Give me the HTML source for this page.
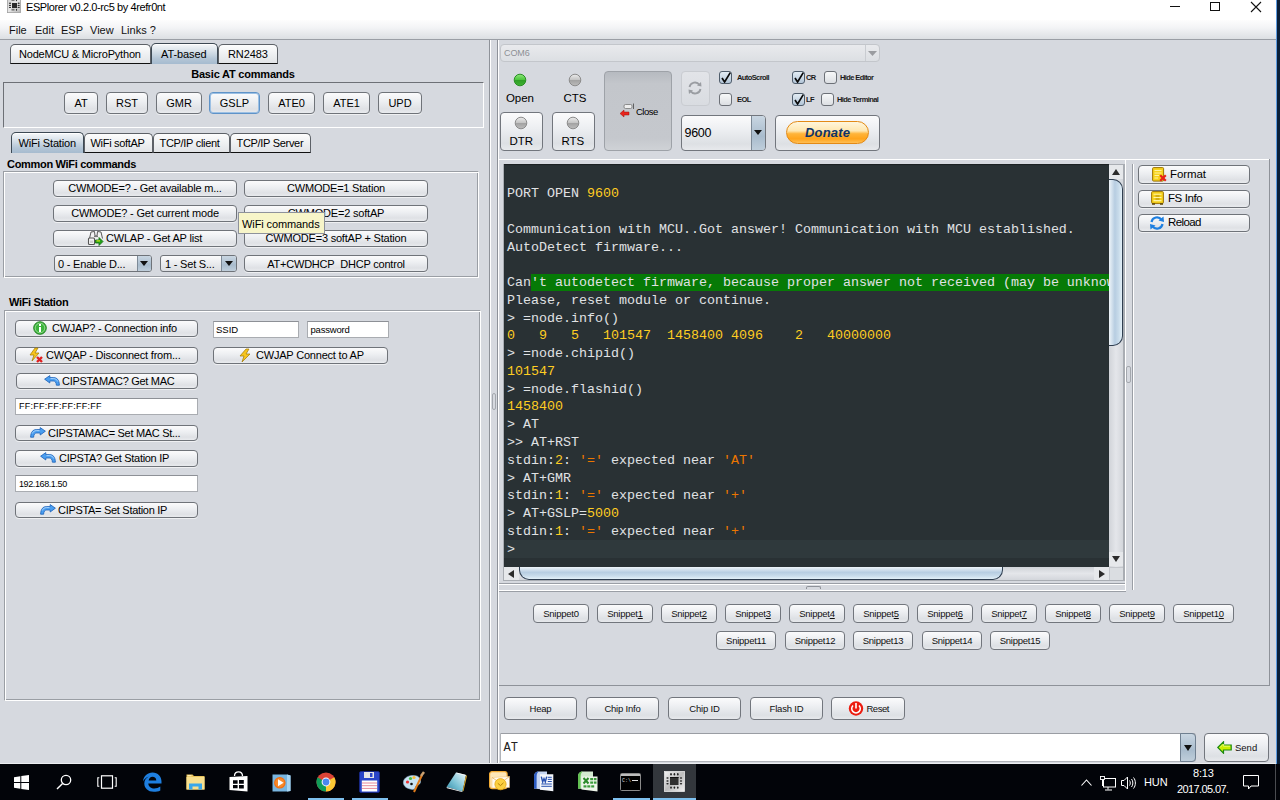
<!DOCTYPE html><html><head><meta charset="utf-8"><title>ESPlorer</title><style>
*{margin:0;padding:0;box-sizing:border-box}
html,body{width:1280px;height:800px;overflow:hidden;background:#d6d9df;font-family:"Liberation Sans",sans-serif;font-size:11px;color:#000}
div,span,svg{position:absolute}
.t{white-space:nowrap;line-height:1}
.t span,.t svg{position:relative}
pre span{position:static}
.btn{border:1px solid #6f7379;border-radius:4px;background:linear-gradient(#fbfbfc 0%,#eceef1 45%,#dfe1e5 80%,#e9ebee 100%);box-shadow:0 1px 0 rgba(255,255,255,.6)}
.sbtn{border:1px solid #72767d;border-radius:4px;background:linear-gradient(#fbfbfc 0%,#edeff2 40%,#dde0e4 82%,#e7e9ec 100%)}
.tab{border:1px solid #5d6167;border-bottom:1px solid #111;border-radius:5px 5px 0 0;background:linear-gradient(#fdfdfd,#eceef0 60%,#e2e4e7)}
.tabsel{border:1px solid #3d4954;border-bottom:none;border-radius:5px 5px 0 0;background:linear-gradient(#f6f8fa 0%,#d9e2ea 35%,#b3c5d6 75%,#a6bbcf 100%);box-shadow:inset 0 1px 0 #fff}
.etch{border-top:1px solid #8a8e95;border-left:1px solid #8a8e95;border-right:1px solid #fff;border-bottom:1px solid #fff;box-shadow:inset -1px -1px 0 #8a8e95, inset 1px 1px 0 #fff}
.fld{background:#fff;border:1px solid #a9acb1;border-top-color:#8d9096}
.combo{border:1px solid #6f7379;border-radius:3px;background:linear-gradient(#fbfbfc,#e6e8eb 60%,#dcdee2)}
.arrowbox{border-left:1px solid #7d8a97;background:linear-gradient(#c9d6e2,#a9bccd 60%,#bfcedb)}
.chk{border:1px solid #6c7077;border-radius:3px;background:linear-gradient(#f7f8f9,#dcdfe3)}
</style></head><body>
<div style="left:0px;top:0px;width:1276px;height:20px;background:#fff"></div>
<svg style="left:7px;top:-2px" width="14" height="15" viewBox="0 0 14 15"><defs><linearGradient id="tic" x1="0" y1="0" x2="1" y2="1"><stop offset="0" stop-color="#d0d0d0"/><stop offset="0.5" stop-color="#e6e6e6"/><stop offset="1" stop-color="#b4b4b4"/></linearGradient></defs><rect x="0.4" y="0" width="13.2" height="14.6" fill="url(#tic)" stroke="#a0a0a0" stroke-width="0.8"/><rect x="5" y="5" width="5" height="5" fill="#2a2a2a"/><g fill="#333"><ellipse cx="3" cy="5.3" rx="1.1" ry="0.7"/><ellipse cx="3" cy="7.4" rx="1.1" ry="0.7"/><ellipse cx="3" cy="9.4" rx="1.1" ry="0.7"/><ellipse cx="11.7" cy="5.3" rx="1.1" ry="0.7"/><ellipse cx="11.7" cy="7.4" rx="1.1" ry="0.7"/><ellipse cx="11.7" cy="9.4" rx="1.1" ry="0.7"/><ellipse cx="9.5" cy="2" rx="0.6" ry="1.3"/><ellipse cx="9.5" cy="11.8" rx="0.6" ry="1.1"/></g><rect x="4.5" y="1" width="3" height="2" fill="#777"/><rect x="4.5" y="10.8" width="3" height="1.8" fill="#777"/></svg>
<div class="t" style="left:26px;top:1.69px;font-size:11px;font-family:'Liberation Sans', sans-serif;letter-spacing:-0.4px;color:#000">ESPlorer v0.2.0-rc5 by 4refr0nt</div>
<div style="left:1170px;top:6px;width:10px;height:1px;background:#111"></div>
<div style="left:1210px;top:2px;width:10px;height:9px;border:1px solid #111"></div>
<svg style="left:1250px;top:1px" width="12" height="12" viewBox="0 0 12 12"><path d="M1 1L11 11M11 1L1 11" stroke="#111" stroke-width="1.1"/></svg>
<div style="left:1276px;top:0px;width:1px;height:764px;background:#5d9be0"></div>
<div style="left:1277px;top:0px;width:3px;height:764px;background:#0b1f38"></div>
<div style="left:0px;top:20px;width:1276px;height:19px;background:linear-gradient(#fdfdfd 0%,#f3f4f6 40%,#dcdfe3 100%)"></div>
<div style="left:0px;top:39px;width:1276px;height:1px;background:#9a9ea5"></div>
<div class="t" style="left:9px;top:24.69px;font-size:11px;font-family:'Liberation Sans', sans-serif;color:#111">File</div>
<div class="t" style="left:35px;top:24.69px;font-size:11px;font-family:'Liberation Sans', sans-serif;color:#111">Edit</div>
<div class="t" style="left:61px;top:24.69px;font-size:11px;font-family:'Liberation Sans', sans-serif;color:#111">ESP</div>
<div class="t" style="left:90px;top:24.69px;font-size:11px;font-family:'Liberation Sans', sans-serif;color:#111">View</div>
<div class="t" style="left:121px;top:24.69px;font-size:11px;font-family:'Liberation Sans', sans-serif;color:#111">Links ?</div>
<div class="tab" style="left:10px;top:44px;width:141px;height:20px"></div>
<div class="tab" style="left:218px;top:44px;width:60px;height:20px"></div>
<div class="tabsel" style="left:151px;top:43px;width:67px;height:21px"></div>
<div class="t" style="left:19px;top:48.69px;font-size:11px;font-family:'Liberation Sans', sans-serif;letter-spacing:-0.2px">NodeMCU &amp; MicroPython</div>
<div class="t" style="left:161px;top:48.69px;font-size:11px;font-family:'Liberation Sans', sans-serif;letter-spacing:-0.1px">AT-based</div>
<div class="t" style="left:228px;top:48.69px;font-size:11px;font-family:'Liberation Sans', sans-serif;letter-spacing:-0.1px">RN2483</div>
<div class="t" style="left:-57px;width:600px;text-align:center;top:69.39px;font-size:11px;font-weight:bold;letter-spacing:-0.2px">Basic AT commands</div>
<div style="left:3px;top:82px;width:481px;height:46px;border-top:1px solid #6d7076;border-left:1px solid #6d7076;border-right:1px solid #fff;border-bottom:1px solid #fff"></div>
<div class="btn" style="left:64px;top:92px;width:34px;height:22px;"></div>
<div class="t" style="left:64px;width:34px;text-align:center;top:98.29px;font-size:11px;">AT</div>
<div class="btn" style="left:106px;top:92px;width:42px;height:22px;"></div>
<div class="t" style="left:106px;width:42px;text-align:center;top:98.29px;font-size:11px;">RST</div>
<div class="btn" style="left:156px;top:92px;width:46px;height:22px;"></div>
<div class="t" style="left:156px;width:46px;text-align:center;top:98.29px;font-size:11px;">GMR</div>
<div class="btn" style="left:209px;top:92px;width:51px;height:22px;border-color:#5f93c8;box-shadow:inset 0 0 0 1px #9cc0e4"></div>
<div class="t" style="left:209px;width:51px;text-align:center;top:98.29px;font-size:11px;">GSLP</div>
<div class="btn" style="left:268px;top:92px;width:47px;height:22px;"></div>
<div class="t" style="left:268px;width:47px;text-align:center;top:98.29px;font-size:11px;">ATE0</div>
<div class="btn" style="left:323px;top:92px;width:47px;height:22px;"></div>
<div class="t" style="left:323px;width:47px;text-align:center;top:98.29px;font-size:11px;">ATE1</div>
<div class="btn" style="left:378px;top:92px;width:44px;height:22px;"></div>
<div class="t" style="left:378px;width:44px;text-align:center;top:98.29px;font-size:11px;">UPD</div>
<div class="tab" style="left:84px;top:133px;width:69px;height:20px"></div>
<div class="tab" style="left:153px;top:133px;width:77px;height:20px"></div>
<div class="tab" style="left:230px;top:133px;width:81px;height:20px"></div>
<div class="tabsel" style="left:11px;top:132px;width:73px;height:21px"></div>
<div class="t" style="left:18.5px;top:137.69px;font-size:11px;font-family:'Liberation Sans', sans-serif;letter-spacing:-0.15px">WiFi Station</div>
<div class="t" style="left:90.5px;top:137.69px;font-size:11px;font-family:'Liberation Sans', sans-serif;letter-spacing:-0.3px">WiFi softAP</div>
<div class="t" style="left:159.5px;top:137.69px;font-size:11px;font-family:'Liberation Sans', sans-serif;letter-spacing:-0.3px">TCP/IP client</div>
<div class="t" style="left:236.5px;top:137.69px;font-size:11px;font-family:'Liberation Sans', sans-serif;letter-spacing:-0.3px">TCP/IP Server</div>
<div class="t" style="left:7px;top:158.69px;font-size:11px;font-family:'Liberation Sans', sans-serif;font-weight:bold;letter-spacing:-0.3px">Common WiFi commands</div>
<div style="left:3px;top:171px;width:476px;height:107px;border-top:1px solid #9a9ea4;border-left:1px solid #9a9ea4;border-right:1px solid #fff;border-bottom:1px solid #fff;box-shadow:inset 1px 1px 0 #fff, inset -1px -1px 0 #9a9ea4"></div>
<div class="btn" style="left:53px;top:180px;width:184px;height:17px;"></div>
<div class="t" style="left:53px;width:184px;text-align:center;top:182.69px;font-size:11px;letter-spacing:-0.2px">CWMODE=? - Get available m...</div>
<div class="btn" style="left:244px;top:180px;width:184px;height:17px;"></div>
<div class="t" style="left:244px;width:184px;text-align:center;top:182.69px;font-size:11px;letter-spacing:-0.2px">CWMODE=1 Station</div>
<div class="btn" style="left:53px;top:205px;width:184px;height:17px;"></div>
<div class="t" style="left:53px;width:184px;text-align:center;top:207.69px;font-size:11px;letter-spacing:-0.2px">CWMODE? - Get current mode</div>
<div class="btn" style="left:244px;top:205px;width:184px;height:17px;"></div>
<div class="t" style="left:244px;width:184px;text-align:center;top:207.69px;font-size:11px;letter-spacing:-0.2px">CWMODE=2 softAP</div>
<div class="btn" style="left:53px;top:230px;width:184px;height:17px;"></div>
<svg style="left:87px;top:230px" width="17" height="16" viewBox="0 0 17 16"><path d="M2.5 8.5 L4 2 L7.5 1.5 L8 6 L10 6 L10.5 1.5 L14 2 L15.5 8.5" fill="#f2f2f2" stroke="#5a5a5a" stroke-width="1"/><rect x="1.5" y="8" width="6" height="6.5" rx="1" fill="#f4f4f4" stroke="#555" stroke-width="1.1"/><rect x="3" y="10.5" width="3" height="2.5" fill="#cfcfcf"/><path d="M7 6.5 H11" stroke="#777" stroke-width="1.2"/><path d="M8.5 10 L12 10 L12 7.5 L16 11.5 L12 15.5 L12 13 L8.5 13 Z" fill="#22a018" stroke="#0f6a0a" stroke-width="0.8"/><path d="M9.5 10.9 H13" stroke="#e6f020" stroke-width="1.1"/></svg>
<div class="t" style="left:106px;top:232.69px;font-size:11px;font-family:'Liberation Sans', sans-serif;letter-spacing:-0.2px">CWLAP - Get AP list</div>
<div class="btn" style="left:244px;top:230px;width:184px;height:17px;"></div>
<div class="t" style="left:244px;width:184px;text-align:center;top:232.69px;font-size:11px;letter-spacing:-0.2px">CWMODE=3 softAP + Station</div>
<div class="combo" style="left:54px;top:255px;width:98px;height:17px"></div>
<div class="arrowbox" style="left:137px;top:256px;width:14px;height:15px;border-radius:0 2px 2px 0"></div>
<svg style="left:140px;top:261px" width="8" height="5"><path d="M0 0H8L4 5Z" fill="#111"/></svg>
<div class="t" style="left:58px;top:258.69px;font-size:11px;font-family:'Liberation Sans', sans-serif;letter-spacing:-0.2px">0 - Enable D...</div>
<div class="combo" style="left:160px;top:255px;width:77px;height:17px"></div>
<div class="arrowbox" style="left:221px;top:256px;width:15px;height:15px;border-radius:0 2px 2px 0"></div>
<svg style="left:225px;top:261px" width="8" height="5"><path d="M0 0H8L4 5Z" fill="#111"/></svg>
<div class="t" style="left:165px;top:258.69px;font-size:11px;font-family:'Liberation Sans', sans-serif;letter-spacing:-0.2px">1 - Set S...</div>
<div class="btn" style="left:244px;top:255px;width:184px;height:17px;"></div>
<div class="t" style="left:244px;width:184px;text-align:center;top:258.69px;font-size:11px;letter-spacing:-0.2px">AT+CWDHCP&nbsp; DHCP control</div>
<div style="left:238px;top:212px;width:87px;height:22px;background:#f7f5c9;border:1px solid #8e929b"></div>
<div class="t" style="left:242px;top:218.69px;font-size:11px;font-family:'Liberation Sans', sans-serif;letter-spacing:-0.1px">WiFi commands</div>
<div class="t" style="left:9px;top:296.69px;font-size:11px;font-family:'Liberation Sans', sans-serif;font-weight:bold;letter-spacing:-0.35px">WiFi Station</div>
<div style="left:4px;top:310px;width:477px;height:391px;border-top:1px solid #9a9ea4;border-left:1px solid #9a9ea4;border-right:1px solid #fff;border-bottom:1px solid #fff;box-shadow:inset 1px 1px 0 #fff, inset -1px -1px 0 #9a9ea4"></div>
<div class="btn" style="left:15px;top:320px;width:183px;height:17px;"></div>
<svg style="left:33px;top:321px" width="14" height="14" viewBox="0 0 14 14"><circle cx="7" cy="7" r="6.3" fill="#3cb43c" stroke="#1d7a1d" stroke-width="0.9"/><circle cx="7" cy="7" r="4.8" fill="none" stroke="#c8f0c0" stroke-width="0.6"/><rect x="6" y="6" width="2" height="5" fill="#fff"/><rect x="6" y="3" width="2" height="2" fill="#fff"/></svg>
<div class="t" style="left:52px;top:322.69px;font-size:11px;font-family:'Liberation Sans', sans-serif;letter-spacing:-0.25px">CWJAP? - Connection info</div>
<div class="btn" style="left:15px;top:347px;width:183px;height:17px;"></div>
<svg style="left:28px;top:347px" width="16" height="16" viewBox="0 0 16 16"><path d="M7 1 L2 8 L6 8 L4 14 L11 6 L7 6 L10 1 Z" fill="#f7c51e" stroke="#a07800" stroke-width="0.7"/><path d="M9 10 L14 15 M14 10 L9 15" stroke="#e02020" stroke-width="2.4"/></svg>
<div class="t" style="left:46px;top:349.69px;font-size:11px;font-family:'Liberation Sans', sans-serif;letter-spacing:-0.2px">CWQAP - Disconnect from...</div>
<div class="btn" style="left:213px;top:347px;width:175px;height:17px;"></div>
<svg style="left:238px;top:348px" width="14" height="15" viewBox="0 0 14 15"><path d="M8 1 L2 8 L6 8 L4 14 L12 6 L8 6 L11 1 Z" fill="#f7c51e" stroke="#a07800" stroke-width="0.7"/></svg>
<div class="t" style="left:256px;top:349.69px;font-size:11px;font-family:'Liberation Sans', sans-serif;letter-spacing:-0.2px">CWJAP Connect to AP</div>
<div class="fld" style="left:213px;top:321px;width:86px;height:17px;"></div>
<div class="t" style="left:216px;top:324.96px;font-size:9.5px;font-family:'Liberation Sans', sans-serif;letter-spacing:0px">SSID</div>
<div class="fld" style="left:307px;top:321px;width:82px;height:17px;"></div>
<div class="t" style="left:310.5px;top:324.96px;font-size:9.5px;font-family:'Liberation Sans', sans-serif;letter-spacing:-0.2px">password</div>
<div class="btn" style="left:16px;top:373px;width:182px;height:16px;"></div>
<svg style="left:44px;top:375px" width="16" height="11" viewBox="0 0 16 11"><path d="M0.6 4.2 L5.8 0.6 L5.8 2.6 L9.5 2.6 C13 2.6 15.2 5 15.4 10.2 L12.4 10.2 C12.2 7.4 11.2 6 9.3 6 L5.8 6 L5.8 8 Z" fill="#4a9ef0" stroke="#1a5fb8" stroke-width="0.8" stroke-linejoin="round"/><path d="M6.5 3.6 H9.5 C11.5 3.6 13 4.6 13.8 6.5" fill="none" stroke="#bfe0ff" stroke-width="0.8"/></svg>
<div class="t" style="left:62px;top:375.69px;font-size:11px;font-family:'Liberation Sans', sans-serif;letter-spacing:-0.3px">CIPSTAMAC? Get MAC</div>
<div class="fld" style="left:15px;top:398px;width:183px;height:17px;"></div>
<div class="t" style="left:19px;top:402.38px;font-size:9px;font-family:'Liberation Sans', sans-serif;letter-spacing:0.25px">FF:FF:FF:FF:FF:FF</div>
<div class="btn" style="left:15px;top:425px;width:183px;height:16px;"></div>
<svg style="left:29.5px;top:426.5px" width="16" height="11" viewBox="0 0 16 11"><g transform="translate(16,0) scale(-1,1)"><path d="M0.6 4.2 L5.8 0.6 L5.8 2.6 L9.5 2.6 C13 2.6 15.2 5 15.4 10.2 L12.4 10.2 C12.2 7.4 11.2 6 9.3 6 L5.8 6 L5.8 8 Z" fill="#4a9ef0" stroke="#1a5fb8" stroke-width="0.8" stroke-linejoin="round"/></g><path d="M9.5 3.6 H6.5 C4.5 3.6 3 4.6 2.2 6.5" fill="none" stroke="#bfe0ff" stroke-width="0.8"/></svg>
<div class="t" style="left:48px;top:427.69px;font-size:11px;font-family:'Liberation Sans', sans-serif;letter-spacing:-0.3px">CIPSTAMAC= Set MAC St...</div>
<div class="btn" style="left:15px;top:450px;width:183px;height:17px;"></div>
<svg style="left:40px;top:452px" width="16" height="11" viewBox="0 0 16 11"><path d="M0.6 4.2 L5.8 0.6 L5.8 2.6 L9.5 2.6 C13 2.6 15.2 5 15.4 10.2 L12.4 10.2 C12.2 7.4 11.2 6 9.3 6 L5.8 6 L5.8 8 Z" fill="#4a9ef0" stroke="#1a5fb8" stroke-width="0.8" stroke-linejoin="round"/><path d="M6.5 3.6 H9.5 C11.5 3.6 13 4.6 13.8 6.5" fill="none" stroke="#bfe0ff" stroke-width="0.8"/></svg>
<div class="t" style="left:59px;top:452.69px;font-size:11px;font-family:'Liberation Sans', sans-serif;letter-spacing:-0.3px">CIPSTA? Get Station IP</div>
<div class="fld" style="left:15px;top:475px;width:183px;height:17px;"></div>
<div class="t" style="left:19px;top:480.38px;font-size:9px;font-family:'Liberation Sans', sans-serif;letter-spacing:-0.4px">192.168.1.50</div>
<div class="btn" style="left:15px;top:502px;width:183px;height:16px;"></div>
<svg style="left:40px;top:504px" width="16" height="11" viewBox="0 0 16 11"><g transform="translate(16,0) scale(-1,1)"><path d="M0.6 4.2 L5.8 0.6 L5.8 2.6 L9.5 2.6 C13 2.6 15.2 5 15.4 10.2 L12.4 10.2 C12.2 7.4 11.2 6 9.3 6 L5.8 6 L5.8 8 Z" fill="#4a9ef0" stroke="#1a5fb8" stroke-width="0.8" stroke-linejoin="round"/></g><path d="M9.5 3.6 H6.5 C4.5 3.6 3 4.6 2.2 6.5" fill="none" stroke="#bfe0ff" stroke-width="0.8"/></svg>
<div class="t" style="left:58px;top:504.69px;font-size:11px;font-family:'Liberation Sans', sans-serif;letter-spacing:-0.3px">CIPSTA= Set Station IP</div>
<div style="left:489px;top:40px;width:1px;height:724px;background:#8e9299"></div>
<div style="left:490px;top:40px;width:1px;height:724px;background:#fff"></div>
<div style="left:492px;top:393px;width:4px;height:17px;border:1px solid #a4a8ae;border-radius:2px"></div>
<div style="left:497px;top:40px;width:1px;height:724px;background:#8e9299"></div>
<div style="left:498px;top:40px;width:1px;height:724px;background:#fff"></div>
<div style="left:500px;top:44px;width:380px;height:18px;border:1px solid #c3c6cb;border-radius:4px;background:linear-gradient(#e9eaed,#dcdfe3)"></div>
<div style="left:865px;top:45px;width:1px;height:16px;background:#c9ccd1"></div>
<svg style="left:868px;top:51px" width="9" height="5"><path d="M0 0H9L4.5 5Z" fill="#9a9ca0"/></svg>
<div class="t" style="left:504px;top:48.68px;font-size:9px;font-family:'Liberation Sans', sans-serif;color:#8d9095;letter-spacing:-0.1px">COM6</div>
<svg style="left:513px;top:73px" width="14" height="14" viewBox="0 0 14 14"><defs><linearGradient id="lg520_80" x1="0" y1="0" x2="0" y2="1"><stop offset="0" stop-color="#8fe87c"/><stop offset="0.48" stop-color="#4cc63c"/><stop offset="0.52" stop-color="#2f9e26"/><stop offset="1" stop-color="#3fb332"/></linearGradient></defs><circle cx="7" cy="7" r="5.8" fill="url(#lg520_80)" stroke="#2a8f25" stroke-width="1"/></svg>
<div class="t" style="left:506px;top:93.47px;font-size:11.5px;font-family:'Liberation Sans', sans-serif;letter-spacing:-0.1px">Open</div>
<svg style="left:568px;top:73px" width="14" height="14" viewBox="0 0 14 14"><defs><linearGradient id="lg575_80" x1="0" y1="0" x2="0" y2="1"><stop offset="0" stop-color="#ececec"/><stop offset="0.48" stop-color="#c4c4c4"/><stop offset="0.52" stop-color="#a2a2a2"/><stop offset="1" stop-color="#bcbcbc"/></linearGradient></defs><circle cx="7" cy="7" r="5.8" fill="url(#lg575_80)" stroke="#8c8c8c" stroke-width="1"/></svg>
<div class="t" style="left:563.5px;top:93.47px;font-size:11.5px;font-family:'Liberation Sans', sans-serif;letter-spacing:-0.1px">CTS</div>
<div class="sbtn" style="left:500px;top:112px;width:43px;height:39px;"></div>
<svg style="left:514px;top:115.5px" width="14" height="14" viewBox="0 0 14 14"><defs><linearGradient id="lg521_122.5" x1="0" y1="0" x2="0" y2="1"><stop offset="0" stop-color="#ececec"/><stop offset="0.48" stop-color="#c4c4c4"/><stop offset="0.52" stop-color="#a2a2a2"/><stop offset="1" stop-color="#bcbcbc"/></linearGradient></defs><circle cx="7" cy="7" r="5.8" fill="url(#lg521_122.5)" stroke="#8c8c8c" stroke-width="1"/></svg>
<div class="t" style="left:509.5px;top:136.27px;font-size:11.5px;font-family:'Liberation Sans', sans-serif;letter-spacing:-0.1px">DTR</div>
<div class="sbtn" style="left:552px;top:112px;width:43px;height:39px;"></div>
<svg style="left:566px;top:115.5px" width="14" height="14" viewBox="0 0 14 14"><defs><linearGradient id="lg573_122.5" x1="0" y1="0" x2="0" y2="1"><stop offset="0" stop-color="#ececec"/><stop offset="0.48" stop-color="#c4c4c4"/><stop offset="0.52" stop-color="#a2a2a2"/><stop offset="1" stop-color="#bcbcbc"/></linearGradient></defs><circle cx="7" cy="7" r="5.8" fill="url(#lg573_122.5)" stroke="#8c8c8c" stroke-width="1"/></svg>
<div class="t" style="left:561.5px;top:136.27px;font-size:11.5px;font-family:'Liberation Sans', sans-serif;letter-spacing:-0.1px">RTS</div>
<div style="left:604px;top:71px;width:68px;height:80px;border:1px solid #9ea2a8;border-radius:4px;background:linear-gradient(#b6bac0,#c3c6cb 15%,#c5c8cd 85%,#cfd2d6)"></div>
<svg style="left:619px;top:103px" width="16" height="15" viewBox="0 0 16 15"><rect x="5" y="1.5" width="8" height="4" rx="1.5" fill="#eee" stroke="#777" stroke-width="0.8"/><path d="M14.5 0.5V6" stroke="#555" stroke-width="0.9"/><path d="M1 10.5 L5 7 L5 9 L10 9 L10 12 L5 12 L5 14 Z" fill="#e8231c" stroke="#a0100a" stroke-width="0.5"/></svg>
<div class="t" style="left:636px;top:107.46px;font-size:9.5px;font-family:'Liberation Sans', sans-serif;letter-spacing:-0.5px">Close</div>
<div style="left:681px;top:71px;width:29px;height:35px;border:1px solid #c9ccd1;border-radius:4px;background:linear-gradient(#e2e4e8,#d9dce1)"></div>
<svg style="left:687px;top:80px" width="16" height="16" viewBox="0 0 16 16"><path d="M2.5 7 A5.5 5.5 0 0 1 12.5 5" fill="none" stroke="#9a9da2" stroke-width="1.8"/><path d="M13.5 9 A5.5 5.5 0 0 1 3.5 11" fill="none" stroke="#9a9da2" stroke-width="1.8"/><path d="M10 5.5 L14.5 6.5 L14 2Z" fill="#9a9da2"/><path d="M6 10.5 L1.5 9.5 L2 14Z" fill="#9a9da2"/></svg>
<div class="chk" style="left:719px;top:71px;width:13px;height:13px;border-color:#4f5d6c;background:linear-gradient(#e3ecf4,#b3c6d8)"></div>
<svg style="left:721px;top:72px" width="10" height="11" viewBox="0 0 10 11"><path d="M1 6 L3.6 10 L9.3 0.6" fill="none" stroke="#0a0a0a" stroke-width="1.7"/></svg>
<div class="t" style="left:737px;top:73.95px;font-size:7.5px;font-family:'Liberation Sans', sans-serif;letter-spacing:-0.6px;color:#1a1a1a;font-weight:bold">AutoScroll</div>
<div class="chk" style="left:719px;top:93px;width:13px;height:13px;"></div>
<div class="t" style="left:737px;top:95.75px;font-size:7.5px;font-family:'Liberation Sans', sans-serif;letter-spacing:-0.6px;color:#1a1a1a;font-weight:bold">EOL</div>
<div class="chk" style="left:792px;top:71px;width:13px;height:13px;border-color:#4f5d6c;background:linear-gradient(#e3ecf4,#b3c6d8)"></div>
<svg style="left:794px;top:72px" width="10" height="11" viewBox="0 0 10 11"><path d="M1 6 L3.6 10 L9.3 0.6" fill="none" stroke="#0a0a0a" stroke-width="1.7"/></svg>
<div class="t" style="left:806px;top:73.95px;font-size:7.5px;font-family:'Liberation Sans', sans-serif;letter-spacing:-0.6px;color:#1a1a1a;font-weight:bold">CR</div>
<div class="chk" style="left:792px;top:93px;width:13px;height:13px;border-color:#4f5d6c;background:linear-gradient(#e3ecf4,#b3c6d8)"></div>
<svg style="left:794px;top:94px" width="10" height="11" viewBox="0 0 10 11"><path d="M1 6 L3.6 10 L9.3 0.6" fill="none" stroke="#0a0a0a" stroke-width="1.7"/></svg>
<div class="t" style="left:806px;top:95.75px;font-size:7.5px;font-family:'Liberation Sans', sans-serif;letter-spacing:-0.6px;color:#1a1a1a;font-weight:bold">LF</div>
<div class="chk" style="left:824px;top:71px;width:13px;height:13px;"></div>
<div class="t" style="left:840px;top:73.95px;font-size:7.5px;font-family:'Liberation Sans', sans-serif;letter-spacing:-0.6px;color:#1a1a1a;font-weight:bold">Hide Editor</div>
<div class="chk" style="left:821px;top:93px;width:13px;height:13px;"></div>
<div class="t" style="left:837px;top:95.75px;font-size:7.5px;font-family:'Liberation Sans', sans-serif;letter-spacing:-0.6px;color:#1a1a1a;font-weight:bold">Hide Terminal</div>
<div class="sbtn" style="left:681px;top:115px;width:85px;height:36px"></div>
<div class="arrowbox" style="left:751px;top:116px;width:14px;height:34px;border-radius:0 3px 3px 0"></div>
<svg style="left:754px;top:130px" width="8" height="5"><path d="M0 0H8L4 5Z" fill="#111"/></svg>
<div class="t" style="left:684.5px;top:126.72px;font-size:12.5px;font-family:'Liberation Sans', sans-serif;letter-spacing:-0.3px">9600</div>
<div class="sbtn" style="left:775px;top:115px;width:105px;height:36px"></div>
<div style="left:786px;top:121px;width:83px;height:23px;border:1px solid #e38a16;border-radius:12px;background:linear-gradient(#fff6dc 0%,#ffe7b0 42%,#ffb43a 56%,#ffa41c 80%,#ffbf55 100%)"></div>
<div class="t" style="left:805px;top:125.60px;font-size:13px;font-family:'Liberation Sans', sans-serif;font-weight:bold;font-style:italic;color:#0e3468;letter-spacing:0.2px">Donate</div>
<div style="left:499px;top:159px;width:771px;height:1px;background:#fff"></div>
<div style="left:1269px;top:159px;width:1px;height:527px;background:#8e9299"></div>
<div style="left:503px;top:164px;width:621px;height:417px;border:1px solid #a9adb3;background:#e2e4e8"></div>
<div style="left:504px;top:164px;width:605px;height:403px;background:#293134;box-shadow:inset 0 1px 1px rgba(0,0,0,.35)"></div>
<div style="left:504px;top:540.3px;width:605px;height:17.8px;background:#2f393c"></div>
<div style="left:1109px;top:165px;width:14px;height:402px;background:linear-gradient(90deg,#d0d3d8,#e4e6ea 50%,#d3d6db)"></div>
<div style="left:1109px;top:165px;width:14px;height:14px;background:#e6e8eb"></div>
<svg style="left:1112px;top:169px" width="8" height="6"><path d="M0 6H8L4 0Z" fill="#2b2b2b"/></svg>
<div style="left:1109px;top:179px;width:14px;height:167px;border:1px solid #2f3e50;border-left:none;border-radius:0 10px 10px 0;background:linear-gradient(90deg,#eef4f9,#b7cde1 45%,#c9dceb 75%,#e3f0f8)"></div>
<div style="left:1109px;top:552px;width:14px;height:14px;background:#e6e8eb"></div>
<svg style="left:1112px;top:556px" width="8" height="6"><path d="M0 0H8L4 6Z" fill="#2b2b2b"/></svg>
<div style="left:504px;top:567px;width:605px;height:13px;background:linear-gradient(#d0d3d8,#e4e6ea 50%,#d3d6db)"></div>
<div style="left:504px;top:567px;width:15px;height:13px;background:#e6e8eb"></div>
<svg style="left:508px;top:570px" width="6" height="8"><path d="M6 0V8L0 4Z" fill="#2b2b2b"/></svg>
<div style="left:519px;top:567px;width:484px;height:13px;border:1px solid #2f3e50;border-top:none;border-radius:0 0 10px 10px;background:linear-gradient(#eef4f9,#b7cde1 45%,#c9dceb 75%,#e3f0f8)"></div>
<div style="left:1094px;top:567px;width:15px;height:13px;background:#e6e8eb"></div>
<svg style="left:1099px;top:570px" width="6" height="8"><path d="M0 0V8L6 4Z" fill="#2b2b2b"/></svg>
<div style="left:1109px;top:567px;width:14px;height:13px;background:#dadde1;border-left:1px solid #c4c7cc;border-top:1px solid #c4c7cc"></div>
<div style="left:504px;top:164px;width:605px;height:403px;overflow:hidden">
<div style="left:27px;top:109.7px;width:600px;height:17.8px;background:#067a06"></div>
<pre style="position:absolute;left:3px;top:3.5px;margin:0;font-family:'Liberation Mono',monospace;font-size:13.333px;line-height:17.77px;color:#e0e2e4">

PORT OPEN <span style="color:#ffcd22">9600</span>

Communication with MCU..Got answer! Communication with MCU established.
AutoDetect firmware...

Can't autodetect firmware, because proper answer not received (may be unknown firmware)
Please, reset module or continue.
&gt; =node.info()
<span style="color:#ffcd22">0   9   5   101547  1458400 4096    2   40000000</span>
&gt; =node.chipid()
<span style="color:#ffcd22">101547</span>
&gt; =node.flashid()
<span style="color:#ffcd22">1458400</span>
&gt; AT
&gt;&gt; AT+RST
stdin:<span style="color:#ffcd22">2</span>: <span style="color:#ec7600">'='</span> expected near <span style="color:#ec7600">'AT'</span>
&gt; AT+GMR
stdin:<span style="color:#ffcd22">1</span>: <span style="color:#ec7600">'='</span> expected near <span style="color:#ec7600">'+'</span>
&gt; AT+GSLP=<span style="color:#ffcd22">5000</span>
stdin:<span style="color:#ffcd22">1</span>: <span style="color:#ec7600">'='</span> expected near <span style="color:#ec7600">'+'</span>
&gt;</pre>
</div>
<div style="left:499px;top:583px;width:627px;height:1px;background:#9a9ea5"></div>
<div style="left:499px;top:584px;width:627px;height:1px;background:#fff"></div>
<div style="left:499px;top:591px;width:627px;height:1px;background:#9a9ea5"></div>
<div style="left:499px;top:590px;width:627px;height:1px;background:#fff"></div>
<div style="left:806px;top:586px;width:15px;height:3px;border:1px solid #8e9299;border-bottom:none;border-radius:2px 2px 0 0"></div>
<div style="left:1125px;top:159px;width:1px;height:432px;background:#fff"></div>
<div style="left:1124px;top:164px;width:1px;height:417px;background:#a9adb3"></div>
<div style="left:1132px;top:164px;width:1px;height:426px;background:#9a9ea5"></div>
<div style="left:1133px;top:164px;width:1px;height:426px;background:#fff"></div>
<div style="left:1126px;top:366px;width:5px;height:17px;border:1px solid #a4a8ae;border-radius:2px"></div>
<div class="btn" style="left:1138px;top:165px;width:112px;height:19px;"></div>
<svg style="left:1152px;top:167px" width="15" height="15" viewBox="0 0 15 15"><rect x="0.6" y="0.6" width="11" height="13.5" rx="1" fill="#f7d21c" stroke="#9c7406" stroke-width="1"/><path d="M2.5 3.5H9.5M2.5 6H9.5M2.5 8.5H7M2.5 11H6" stroke="#fff3a0" stroke-width="1"/><path d="M8.2 8.2L13.8 13.8M13.8 8.2L8.2 13.8" stroke="#e8201a" stroke-width="2.2"/></svg>
<div class="t" style="left:1170px;top:169.07px;font-size:11.5px;font-family:'Liberation Sans', sans-serif;letter-spacing:-0.1px">Format</div>
<div class="btn" style="left:1138px;top:190px;width:112px;height:18px;"></div>
<svg style="left:1151px;top:191px" width="13" height="14" viewBox="0 0 13 14"><rect x="0.6" y="0.6" width="11.8" height="11.8" rx="1" fill="#f7d21c" stroke="#9c7406" stroke-width="1"/><path d="M2.5 3.2H10.5M2.5 6.5H10.5M2.5 9.6H10.5" stroke="#fff3a0" stroke-width="1.1"/><path d="M4.5 5H8.5M4.5 8H8.5" stroke="#9c7406" stroke-width="0.8"/><rect x="1" y="12" width="3" height="1.8" fill="#6b5210"/><rect x="9" y="12" width="3" height="1.8" fill="#6b5210"/></svg>
<div class="t" style="left:1168px;top:192.87px;font-size:11.5px;font-family:'Liberation Sans', sans-serif;letter-spacing:-0.4px">FS Info</div>
<div class="btn" style="left:1138px;top:214px;width:112px;height:18px;"></div>
<svg style="left:1149px;top:215px" width="16" height="16" viewBox="0 0 16 16"><path d="M2.5 7 A5.5 5.5 0 0 1 12.5 4.8" fill="none" stroke="#1e7fe0" stroke-width="2.2"/><path d="M13.5 9 A5.5 5.5 0 0 1 3.5 11.2" fill="none" stroke="#1e7fe0" stroke-width="2.2"/><path d="M9.5 5.5 L15 7 L14.5 1.5Z" fill="#1e7fe0"/><path d="M6.5 10.5 L1 9 L1.5 14.5Z" fill="#1e7fe0"/></svg>
<div class="t" style="left:1168px;top:216.87px;font-size:11.5px;font-family:'Liberation Sans', sans-serif;letter-spacing:-0.6px">Reload</div>
<div style="left:499px;top:591px;width:771px;height:95px;border-right:1px solid #8e9299;border-bottom:1px solid #8e9299"></div>
<div class="sbtn" style="left:533px;top:604px;width:56px;height:19px;border-radius:4px"></div>
<div class="t" style="left:533px;width:56px;text-align:center;top:609.26px;font-size:9.5px;letter-spacing:-0.25px;color:#111">Snippet0</div>
<div class="sbtn" style="left:597px;top:604px;width:56px;height:19px;border-radius:4px"></div>
<div class="t" style="left:597px;width:56px;text-align:center;top:609.26px;font-size:9.5px;letter-spacing:-0.25px;color:#111">Snippet<span style="text-decoration:underline">1</span></div>
<div class="sbtn" style="left:661px;top:604px;width:56px;height:19px;border-radius:4px"></div>
<div class="t" style="left:661px;width:56px;text-align:center;top:609.26px;font-size:9.5px;letter-spacing:-0.25px;color:#111">Snippet<span style="text-decoration:underline">2</span></div>
<div class="sbtn" style="left:725px;top:604px;width:56px;height:19px;border-radius:4px"></div>
<div class="t" style="left:725px;width:56px;text-align:center;top:609.26px;font-size:9.5px;letter-spacing:-0.25px;color:#111">Snippet<span style="text-decoration:underline">3</span></div>
<div class="sbtn" style="left:789px;top:604px;width:56px;height:19px;border-radius:4px"></div>
<div class="t" style="left:789px;width:56px;text-align:center;top:609.26px;font-size:9.5px;letter-spacing:-0.25px;color:#111">Snippet<span style="text-decoration:underline">4</span></div>
<div class="sbtn" style="left:853px;top:604px;width:56px;height:19px;border-radius:4px"></div>
<div class="t" style="left:853px;width:56px;text-align:center;top:609.26px;font-size:9.5px;letter-spacing:-0.25px;color:#111">Snippet<span style="text-decoration:underline">5</span></div>
<div class="sbtn" style="left:917px;top:604px;width:56px;height:19px;border-radius:4px"></div>
<div class="t" style="left:917px;width:56px;text-align:center;top:609.26px;font-size:9.5px;letter-spacing:-0.25px;color:#111">Snippet<span style="text-decoration:underline">6</span></div>
<div class="sbtn" style="left:981px;top:604px;width:56px;height:19px;border-radius:4px"></div>
<div class="t" style="left:981px;width:56px;text-align:center;top:609.26px;font-size:9.5px;letter-spacing:-0.25px;color:#111">Snippet<span style="text-decoration:underline">7</span></div>
<div class="sbtn" style="left:1045px;top:604px;width:56px;height:19px;border-radius:4px"></div>
<div class="t" style="left:1045px;width:56px;text-align:center;top:609.26px;font-size:9.5px;letter-spacing:-0.25px;color:#111">Snippet<span style="text-decoration:underline">8</span></div>
<div class="sbtn" style="left:1109px;top:604px;width:56px;height:19px;border-radius:4px"></div>
<div class="t" style="left:1109px;width:56px;text-align:center;top:609.26px;font-size:9.5px;letter-spacing:-0.25px;color:#111">Snippet<span style="text-decoration:underline">9</span></div>
<div class="sbtn" style="left:1173px;top:604px;width:61px;height:19px;border-radius:4px"></div>
<div class="t" style="left:1173px;width:61px;text-align:center;top:609.26px;font-size:9.5px;letter-spacing:-0.25px;color:#111">Snippet1<span style="text-decoration:underline">0</span></div>
<div class="sbtn" style="left:716px;top:631px;width:60px;height:19px;border-radius:4px"></div>
<div class="t" style="left:716px;width:60px;text-align:center;top:636.26px;font-size:9.5px;letter-spacing:-0.25px;color:#111">Snippet11</div>
<div class="sbtn" style="left:785px;top:631px;width:60px;height:19px;border-radius:4px"></div>
<div class="t" style="left:785px;width:60px;text-align:center;top:636.26px;font-size:9.5px;letter-spacing:-0.25px;color:#111">Snippet12</div>
<div class="sbtn" style="left:853px;top:631px;width:60px;height:19px;border-radius:4px"></div>
<div class="t" style="left:853px;width:60px;text-align:center;top:636.26px;font-size:9.5px;letter-spacing:-0.25px;color:#111">Snippet13</div>
<div class="sbtn" style="left:922px;top:631px;width:60px;height:19px;border-radius:4px"></div>
<div class="t" style="left:922px;width:60px;text-align:center;top:636.26px;font-size:9.5px;letter-spacing:-0.25px;color:#111">Snippet14</div>
<div class="sbtn" style="left:990px;top:631px;width:60px;height:19px;border-radius:4px"></div>
<div class="t" style="left:990px;width:60px;text-align:center;top:636.26px;font-size:9.5px;letter-spacing:-0.25px;color:#111">Snippet15</div>
<div class="sbtn" style="left:504px;top:697px;width:73px;height:23px"></div>
<div class="t" style="left:504px;width:73px;text-align:center;top:704.16px;font-size:9.5px;letter-spacing:-0.2px;color:#111">Heap</div>
<div class="sbtn" style="left:586px;top:697px;width:73px;height:23px"></div>
<div class="t" style="left:586px;width:73px;text-align:center;top:704.16px;font-size:9.5px;letter-spacing:-0.2px;color:#111">Chip Info</div>
<div class="sbtn" style="left:668px;top:697px;width:73px;height:23px"></div>
<div class="t" style="left:668px;width:73px;text-align:center;top:704.16px;font-size:9.5px;letter-spacing:-0.2px;color:#111">Chip ID</div>
<div class="sbtn" style="left:750px;top:697px;width:73px;height:23px"></div>
<div class="t" style="left:750px;width:73px;text-align:center;top:704.16px;font-size:9.5px;letter-spacing:-0.2px;color:#111">Flash ID</div>
<div class="sbtn" style="left:831px;top:697px;width:74px;height:23px"></div>
<svg style="left:848px;top:700px" width="16" height="17" viewBox="0 0 16 17"><circle cx="8" cy="8.5" r="7.2" fill="#ec1c10"/><path d="M5 5.5 A4.3 4.3 0 1 0 11 5.5" fill="none" stroke="#fff" stroke-width="1.5"/><path d="M8 3V8.5" stroke="#fff" stroke-width="1.6"/></svg>
<div class="t" style="left:866.5px;top:703.96px;font-size:9.5px;font-family:'Liberation Sans', sans-serif;letter-spacing:-0.5px;color:#111">Reset</div>
<div style="left:500px;top:733px;width:696px;height:29px;background:#fff;border:1px solid #b0b3b8;border-top-color:#9a9da3;border-radius:0 3px 3px 0"></div>
<div class="arrowbox" style="left:1180px;top:733px;width:16px;height:29px;border:1px solid #6f7f90;border-radius:0 4px 4px 0"></div>
<svg style="left:1184px;top:745px" width="8" height="6"><path d="M0 0H8L4 6Z" fill="#111"/></svg>
<div class="t" style="left:503.5px;top:742.20px;font-size:12px;font-family:'Liberation Mono', monospace;letter-spacing:0px;color:#222">AT</div>
<div class="sbtn" style="left:1204px;top:733px;width:65px;height:29px"></div>
<svg style="left:1217px;top:741px" width="15" height="13" viewBox="0 0 15 13"><path d="M0.8 6.5 L6.5 0.8 L6.5 4 L14.2 4 L14.2 9 L6.5 9 L6.5 12.2 Z" fill="#c8f000" stroke="#1c8a10" stroke-width="1.2"/><path d="M3 6.5 L6.5 3 L6.5 5.2 L13 5.2" fill="none" stroke="#eaff80" stroke-width="0.8"/></svg>
<div class="t" style="left:1235px;top:743.16px;font-size:9.5px;font-family:'Liberation Sans', sans-serif;letter-spacing:0px;color:#111">Send</div>
<div style="left:0px;top:763px;width:1276px;height:1px;background:#eceef1"></div>
<div style="left:0px;top:764px;width:1280px;height:36px;background:#020409"></div>
<div style="left:653px;top:764px;width:43px;height:36px;background:#33373c"></div>
<div style="left:308px;top:798px;width:36px;height:2px;background:#7ec0ee"></div>
<div style="left:352px;top:798px;width:36px;height:2px;background:#7ec0ee"></div>
<div style="left:613px;top:798px;width:37px;height:2px;background:#7ec0ee"></div>
<div style="left:653px;top:798px;width:43px;height:2px;background:#7ec0ee"></div>
<svg style="left:14px;top:775px" width="15" height="15" viewBox="0 0 15 15"><path d="M0 2.2L6.3 1.3V7H0Z M7.3 1.1L15 0V7H7.3Z M0 8H6.3V13.7L0 12.8Z M7.3 8H15V15L7.3 13.9Z" fill="#fff"/></svg>
<svg style="left:56px;top:774px" width="16" height="16" viewBox="0 0 16 16"><circle cx="10" cy="6" r="4.7" fill="none" stroke="#fff" stroke-width="1.3"/><path d="M6.6 9.4L1 15" stroke="#fff" stroke-width="1.4"/></svg>
<svg style="left:97px;top:775px" width="20" height="14" viewBox="0 0 20 14"><rect x="4.5" y="0.8" width="11" height="12.4" fill="none" stroke="#fff" stroke-width="1.2"/><path d="M2.3 2.8H0.8V11.2H2.3M17.7 2.8H19.2V11.2H17.7" fill="none" stroke="#fff" stroke-width="1.1"/></svg>
<svg style="left:142px;top:772px" width="20" height="20" viewBox="0 0 20 20"><path d="M1 9.5C1.5 4 5.5 0.5 10.5 0.5C16 0.5 19.5 4.5 19.5 9.5V11.5H6.3C6.6 14.8 9.2 16.5 12.3 16.5C14.6 16.5 16.6 15.8 18.3 14.6V18.4C16.5 19.4 14.2 19.8 11.8 19.8C5.8 19.8 2.3 16 2.3 11.5C2.3 8.5 4 6 6.8 4.6C4.2 5.5 2.2 7.3 1 9.5Z M6.6 8.4H14.3C14.2 6.2 12.7 4.8 10.5 4.8C8.5 4.8 7 6.3 6.6 8.4Z" fill="#1e7fe0"/></svg>
<svg style="left:186px;top:774px" width="19" height="16" viewBox="0 0 19 16"><path d="M0.5 0.5H6.5L8 2H18.5V15.5H0.5Z" fill="#e9c35a"/><rect x="0.5" y="3" width="18" height="12.5" fill="#f8e08e"/><rect x="1.5" y="1.2" width="4" height="1" fill="#fff6c8"/><path d="M3 15.5V9.5H16V15.5H12.5V12.5H6.5V15.5Z" fill="#3aa7ea"/></svg>
<svg style="left:228px;top:771px" width="21" height="21" viewBox="0 0 21 21"><path d="M6.5 5C6.5 1.8 8.3 0.8 10.5 0.8C12.7 0.8 14.5 1.8 14.5 5" fill="none" stroke="#fff" stroke-width="1.3"/><path d="M1.5 6L19.5 5V20.5L1.5 19Z" fill="#fff"/><path d="M5 9.3H9.6V12.8H5Z M11 9.1H15.8V12.8H11Z M5 14H9.6V17.2H5Z M11 14H15.8V17.6H11Z" fill="#020409"/></svg>
<svg style="left:272px;top:774px" width="19" height="18" viewBox="0 0 19 18"><path d="M0.5 0.5H15L18.5 1.5V17L15 17.5H0.5Z" fill="#79b6e0"/><path d="M15 0.5L18.5 1.5V17L15 17.5Z" fill="#a9d6f2"/><circle cx="7.8" cy="8.8" r="5.8" fill="#f26f12"/><circle cx="7.8" cy="8.8" r="4.6" fill="#f88a2a"/><path d="M6 5.3V12.3L11.6 8.8Z" fill="#fff"/></svg>
<svg style="left:316px;top:772px" width="20" height="20" viewBox="0 0 20 20"><circle cx="10" cy="10" r="9.6" fill="#db4437"/><path d="M10 10L1.7 5.2A9.6 9.6 0 0 0 10 19.6Z" fill="#0f9d58"/><path d="M10 10L10 19.6A9.6 9.6 0 0 0 18.3 5.2Z" fill="#fcc934"/><path d="M10 10L1.7 5.2L10 5.2Z" fill="#db4437"/><circle cx="10" cy="10" r="4.4" fill="#fff"/><circle cx="10" cy="10" r="3.4" fill="#4a88ee"/></svg>
<svg style="left:359px;top:771px" width="21" height="22" viewBox="0 0 21 22"><rect x="0.5" y="0.5" width="20" height="21" rx="1.5" fill="#2a46c8" stroke="#18288a" stroke-width="0.8"/><rect x="5" y="1" width="10" height="6" fill="#e6e6e6"/><rect x="11" y="2" width="2.5" height="4" fill="#2a46c8"/><rect x="2.8" y="9.5" width="15.4" height="11" fill="#fff"/><path d="M3 12H18M3 14.7H18M3 17.4H18" stroke="#e88a9a" stroke-width="1"/></svg>
<svg style="left:402px;top:771px" width="23" height="22" viewBox="0 0 23 22"><path d="M2 14C0 10 3 5 10 4.5C16 4 19 7 18.5 11C18 14.5 14 14 13.5 16C13 18.5 11 19 8 18C4.5 17 3 16 2 14Z" fill="#c9e2f2" stroke="#8fb5cf" stroke-width="0.6"/><circle cx="5.5" cy="11" r="1.6" fill="#e33"/><circle cx="8.5" cy="7.5" r="1.6" fill="#4b4"/><circle cx="12" cy="6.5" r="1.6" fill="#fb3"/><circle cx="9.5" cy="13" r="1.3" fill="#111"/><path d="M12 21L20 4" stroke="#e07b1a" stroke-width="2"/><path d="M19 5L22 1" stroke="#caa070" stroke-width="2.5"/></svg>
<svg style="left:446px;top:772px" width="21" height="20" viewBox="0 0 21 20"><defs><linearGradient id="npg" x1="1" y1="0" x2="0" y2="1"><stop offset="0" stop-color="#eef8fb"/><stop offset="0.55" stop-color="#7cc3d6"/><stop offset="1" stop-color="#2f8aa6"/></linearGradient></defs><path d="M10 0.5L20 3L16.5 19.5L0.5 15Z" fill="url(#npg)"/><path d="M20 3L21 4L17.5 19L16.5 19.5Z" fill="#d9a62a"/><path d="M0.5 15L16.5 19.5L16 20L1 16.3Z" fill="#f4f4f4"/><path d="M10.5 1L19.5 3.2" stroke="#fff" stroke-width="0.8"/></svg>
<svg style="left:489px;top:771px" width="21" height="20" viewBox="0 0 21 20"><rect x="0.6" y="0.6" width="17.5" height="17" rx="2.5" fill="#fde7b8" stroke="#f2ab34" stroke-width="1.2"/><path d="M3 6.5L20.5 5.5V16.5L3 17Z" fill="#fffaf0" stroke="#f0c070" stroke-width="0.5"/><path d="M3 6.5L11.5 12L20.5 5.5" fill="none" stroke="#e9b860" stroke-width="0.8"/><circle cx="11.5" cy="13.2" r="5.6" fill="#fcd040" stroke="#e3a512" stroke-width="0.8"/><path d="M8.8 12.3L11.5 14.6L14.5 11.8" fill="none" stroke="#b07a00" stroke-width="0.9"/></svg>
<svg style="left:533px;top:771px" width="21" height="21" viewBox="0 0 21 21"><path d="M1 6C1 2 3 0.5 6 0.5H14V19L1 17.5Z" fill="#c6d6f2"/><path d="M1 6C1 2 3 0.5 6 0.5C4.2 1.5 3.6 3 3.6 6V17.8L1 17.5Z" fill="#2b5bc2"/><path d="M7 3.2H20.3V20.3L7 18.8Z" fill="#f3f6fb"/><path d="M8.3 5.6L9.7 11L11 7.6L12.3 11L13.7 5.6" fill="none" stroke="#2650b0" stroke-width="1.4"/><path d="M14.8 6.3H18.8M14.8 8.4H18.8M14.8 10.5H18.8M8.3 13H18.8M8.3 15.3H18.8" stroke="#2650b0" stroke-width="1"/></svg>
<svg style="left:577px;top:771px" width="21" height="21" viewBox="0 0 21 21"><path d="M1 6C1 2 3 0.5 6 0.5H16V19L1 17.5Z" fill="#d3ead0"/><path d="M1 6C1 2 3 0.5 6 0.5C4.2 1.5 3.6 3 3.6 6V17.8L1 17.5Z" fill="#62c052"/><path d="M4.5 5.5H20.5V20.5L4.5 18.5Z" fill="#eef5ea"/><path d="M6.5 7L11.5 12.5M11.5 7L6.5 12.5" stroke="#2a8a2a" stroke-width="2"/><g fill="#3b9b3b"><rect x="13.2" y="7" width="3" height="2.2"/><rect x="13.2" y="10.5" width="3" height="2.2"/><rect x="6.5" y="14.3" width="3" height="2.2"/><rect x="10.3" y="14.3" width="3" height="2.2"/><rect x="14.2" y="14.3" width="3" height="2.2"/><rect x="17" y="7" width="2.5" height="2.2"/><rect x="17" y="10.5" width="2.5" height="2.2"/></g></svg>
<svg style="left:620px;top:773px" width="21" height="18" viewBox="0 0 21 18"><rect x="0.5" y="0.5" width="20" height="17" rx="1" fill="#000" stroke="#9a9a9a" stroke-width="0.9"/><rect x="1" y="1" width="19" height="2" fill="#bdbdbd"/><text x="2" y="9" font-family="Liberation Mono" font-size="5" fill="#ddd">C:\</text><rect x="12" y="7" width="6" height="1" fill="#ddd"/></svg>
<svg style="left:664px;top:771px" width="21" height="21" viewBox="0 0 21 21"><defs><linearGradient id="tbc" x1="0" y1="0" x2="1" y2="1"><stop offset="0" stop-color="#f4f4f4"/><stop offset="0.5" stop-color="#bdbdbd"/><stop offset="1" stop-color="#f0f0f0"/></linearGradient></defs><rect x="0.5" y="0.5" width="20" height="20" fill="url(#tbc)" stroke="#e8e8e8" stroke-width="0.8"/><rect x="6" y="6" width="8.5" height="8" fill="#303030"/><rect x="6" y="6" width="8.5" height="1" fill="#111"/><g fill="#1e1e1e"><ellipse cx="7" cy="3.3" rx="0.8" ry="1.2"/><ellipse cx="10.4" cy="3.3" rx="0.8" ry="1.2"/><ellipse cx="13.8" cy="3.3" rx="0.8" ry="1.2"/><ellipse cx="7" cy="16.6" rx="0.8" ry="1.2"/><ellipse cx="10.4" cy="16.6" rx="0.8" ry="1.2"/><ellipse cx="13.8" cy="16.6" rx="0.8" ry="1.2"/><ellipse cx="3.5" cy="7" rx="1.2" ry="0.8"/><ellipse cx="3.5" cy="10" rx="1.2" ry="0.8"/><ellipse cx="3.5" cy="12.8" rx="1.2" ry="0.8"/><ellipse cx="17" cy="7" rx="1.2" ry="0.8"/><ellipse cx="17" cy="10" rx="1.2" ry="0.8"/><ellipse cx="17" cy="12.8" rx="1.2" ry="0.8"/></g></svg>
<svg style="left:1081px;top:779px" width="11" height="7" viewBox="0 0 11 7"><path d="M0.5 6.5L5.5 1L10.5 6.5" fill="none" stroke="#fff" stroke-width="1.1"/></svg>
<svg style="left:1100px;top:776px" width="16" height="15" viewBox="0 0 16 15"><rect x="3.5" y="2.5" width="12" height="8.5" fill="none" stroke="#fff" stroke-width="1"/><rect x="0.5" y="0.5" width="4" height="3" fill="#020409" stroke="#fff" stroke-width="0.9"/><path d="M2.5 3.5V10M8 11V13.5M5 14H12" stroke="#fff" stroke-width="1"/></svg>
<svg style="left:1121px;top:776px" width="16" height="14" viewBox="0 0 16 14"><path d="M0.5 4.5H3L6.5 1V13L3 9.5H0.5Z" fill="none" stroke="#fff" stroke-width="1"/><path d="M8.5 4.5C9.5 5.5 9.5 8.5 8.5 9.5M10.5 3C12.3 5 12.3 9 10.5 11M12.5 1.5C15 4.5 15 9.5 12.5 12.5" fill="none" stroke="#fff" stroke-width="1"/></svg>
<div class="t" style="left:1144px;top:776.99px;font-size:11px;font-family:'Liberation Sans', sans-serif;color:#fff;letter-spacing:-0.1px">HUN</div>
<div class="t" style="left:1193px;top:768.49px;font-size:11px;font-family:'Liberation Sans', sans-serif;color:#fff;letter-spacing:-0.2px">8:13</div>
<div class="t" style="left:1177px;top:784.49px;font-size:11px;font-family:'Liberation Sans', sans-serif;color:#fff;letter-spacing:-0.6px">2017.05.07.</div>
<svg style="left:1243px;top:775px" width="16" height="15" viewBox="0 0 16 15"><path d="M0.5 0.5H15.5V11H8L5.5 14V11H0.5Z" fill="none" stroke="#fff" stroke-width="1"/></svg>
<div style="left:1275px;top:764px;width:1px;height:36px;background:#4a4c50"></div>
</body></html>
